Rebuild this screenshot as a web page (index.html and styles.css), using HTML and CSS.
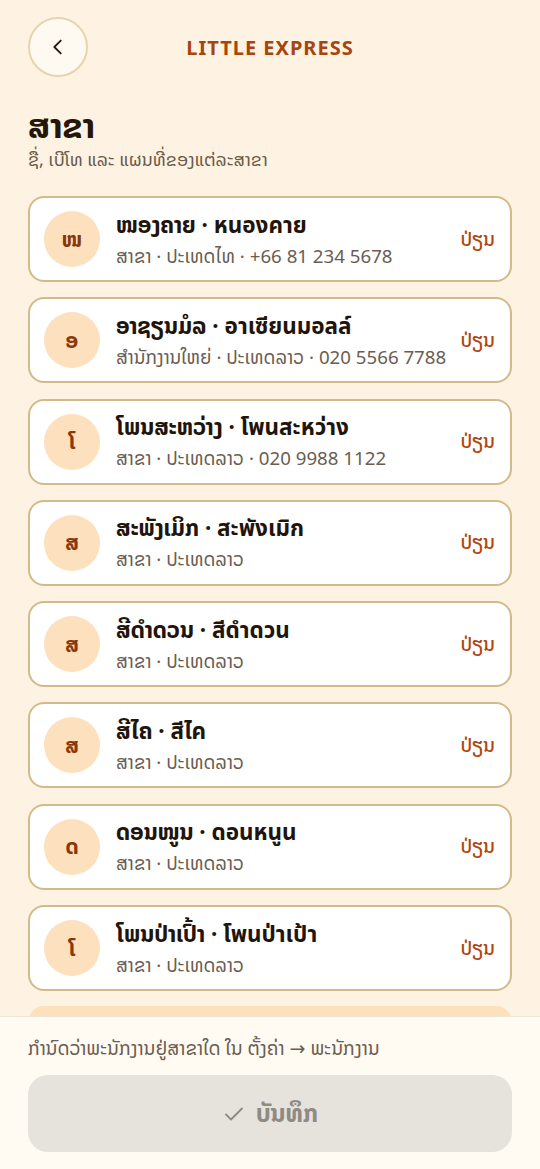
FILE: index.html
```html
<!DOCTYPE html>
<html lang="lo">
<head>
    <meta charset="UTF-8">
    <meta name="viewport" content="width=device-width, initial-scale=1.0">
    <title>ສາຂາ · Little Express</title>
    <link rel="stylesheet" href="styles.css">
</head>
<body>
    <div class="screen">
        <header class="topbar">
            <button class="back-btn" aria-label="ກັບຄືນ">
                <svg width="22" height="22" viewBox="0 0 24 24" fill="none" stroke="#2a1a0e" stroke-width="2" stroke-linecap="round" stroke-linejoin="round"><path d="M15 5l-7 7 7 7"/></svg>
            </button>
            <div class="brand">LITTLE EXPRESS</div>
            <div class="spacer"></div>
        </header>

        <main class="content">
            <h1>ສາຂາ</h1>
            <p class="subtitle">ຊື່, ເບີໂທ ແລະ ແຜນທີ່ຂອງແຕ່ລະສາຂາ</p>

            <ul class="branch-list">
                <li class="branch">
                    <div class="avatar">ໜ</div>
                    <div class="info">
                        <div class="name">ໜອງຄາຍ · หนองคาย</div>
                        <div class="meta">ສາຂາ · ປະເທດໄທ · +66 81 234 5678</div>
                    </div>
                    <a class="edit" href="#">ປ່ຽນ</a>
                </li>
                <li class="branch">
                    <div class="avatar">ອ</div>
                    <div class="info">
                        <div class="name">ອາຊຽນມໍລ · อาเซียนมอลล์</div>
                        <div class="meta">ສຳນັກງານໃຫຍ່ · ປະເທດລາວ · 020 5566 7788</div>
                    </div>
                    <a class="edit" href="#">ປ່ຽນ</a>
                </li>
                <li class="branch">
                    <div class="avatar">ໂ</div>
                    <div class="info">
                        <div class="name">ໂພນສະຫວ່າງ · โพนสะหว่าง</div>
                        <div class="meta">ສາຂາ · ປະເທດລາວ · 020 9988 1122</div>
                    </div>
                    <a class="edit" href="#">ປ່ຽນ</a>
                </li>
                <li class="branch">
                    <div class="avatar">ສ</div>
                    <div class="info">
                        <div class="name">ສະພັງເມິກ · สะพังเมิก</div>
                        <div class="meta">ສາຂາ · ປະເທດລາວ</div>
                    </div>
                    <a class="edit" href="#">ປ່ຽນ</a>
                </li>
                <li class="branch">
                    <div class="avatar">ສ</div>
                    <div class="info">
                        <div class="name">ສີດຳດວນ · สีดำดวน</div>
                        <div class="meta">ສາຂາ · ປະເທດລາວ</div>
                    </div>
                    <a class="edit" href="#">ປ່ຽນ</a>
                </li>
                <li class="branch">
                    <div class="avatar">ສ</div>
                    <div class="info">
                        <div class="name">ສີໄຄ · สีไค</div>
                        <div class="meta">ສາຂາ · ປະເທດລາວ</div>
                    </div>
                    <a class="edit" href="#">ປ່ຽນ</a>
                </li>
                <li class="branch">
                    <div class="avatar">ດ</div>
                    <div class="info">
                        <div class="name">ດອນໜູນ · ดอนหนูน</div>
                        <div class="meta">ສາຂາ · ປະເທດລາວ</div>
                    </div>
                    <a class="edit" href="#">ປ່ຽນ</a>
                </li>
                <li class="branch">
                    <div class="avatar">ໂ</div>
                    <div class="info">
                        <div class="name">ໂພນປ່າເປົ້າ · โพนป่าเป้า</div>
                        <div class="meta">ສາຂາ · ປະເທດລາວ</div>
                    </div>
                    <a class="edit" href="#">ປ່ຽນ</a>
                </li>
                <li class="add-branch" aria-label="ເພີ່ມສາຂາ"></li>
            </ul>
        </main>

        <footer class="footer">
            <p class="hint">ກຳນົດວ່າພະນັກງານຢູ່ສາຂາໃດ ໃນ ຕັ້ງຄ່າ → ພະນັກງານ</p>
            <button class="save-btn" disabled>
                <svg width="24" height="24" viewBox="0 0 24 24" fill="none" stroke="#8e8983" stroke-width="1.8" stroke-linecap="round" stroke-linejoin="round"><path d="M4 12.5l5 5L20 6.5"/></svg>
                <span>ບັນທຶກ</span>
            </button>
        </footer>
    </div>
</body>
</html>
```

FILE: styles.css
```css
/* Base */
* {
    box-sizing: border-box;
    margin: 0;
    padding: 0;
}

body {
    font-family: 'Noto Sans', 'Noto Sans Lao', 'Noto Sans Thai', 'DejaVu Sans', sans-serif;
    background: #fef3e2;
    color: #2a1a0e;
}

.screen {
    height: 100vh;
    display: flex;
    flex-direction: column;
    overflow: hidden;
}

/* Top bar */
.topbar {
    display: flex;
    align-items: center;
    padding: 17px 28px 0;
    height: 77px;
}

.back-btn {
    width: 60px;
    height: 60px;
    border-radius: 50%;
    border: 2px solid #e6d4b0;
    background: #fffaf1;
    display: flex;
    align-items: center;
    justify-content: center;
    cursor: pointer;
}

.brand {
    flex: 1;
    text-align: center;
    font-size: 20px;
    font-weight: 700;
    letter-spacing: 1px;
    color: #a8450f;
}

.spacer {
    width: 60px;
}

/* Content */
.content {
    flex: 1;
    overflow: hidden;
    padding: 28px 28px 0;
}

h1 {
    font-size: 34px;
    font-weight: 700;
    line-height: 41px;
    color: #24160b;
}

.subtitle {
    font-size: 18px;
    line-height: 24px;
    color: #6b5a4a;
    margin-top: 1px;
    margin-bottom: 25px;
}

.branch-list {
    list-style: none;
    display: flex;
    flex-direction: column;
    gap: 15.3px;
}

.branch {
    display: flex;
    align-items: center;
    gap: 16px;
    height: 86px;
    padding: 0 15px 0 14px;
    background: #fff;
    border: 2px solid #d3ba8b;
    border-radius: 16px;
}

.avatar {
    width: 56px;
    height: 56px;
    flex-shrink: 0;
    border-radius: 50%;
    background: #fde0bd;
    color: #8a380b;
    font-size: 21px;
    font-weight: 700;
    display: flex;
    align-items: center;
    justify-content: center;
}

.info {
    flex: 1;
    min-width: 0;
}

.name {
    font-size: 22.5px;
    line-height: 28px;
    font-weight: 700;
    color: #1f150c;
    white-space: nowrap;
}

.meta {
    font-size: 18.7px;
    line-height: 24px;
    color: #6b5d50;
    margin-top: 5px;
    white-space: nowrap;
}

.edit {
    font-size: 19px;
    font-weight: 500;
    color: #b0470e;
    text-decoration: none;
}

.add-branch {
    height: 86px;
    flex-shrink: 0;
    border-radius: 16px;
    background: #fde0bc;
}

/* Footer */
.footer {
    background: #fffaf2;
    border-top: 1px solid #efe5d5;
    padding: 19px 28px 17px;
}

.hint {
    font-size: 19px;
    line-height: 24px;
    color: #6b5d50;
    margin-bottom: 15px;
}

.save-btn {
    width: 100%;
    height: 77px;
    border: none;
    border-radius: 20px;
    background: #e6e2dc;
    color: #8f8a84;
    font-family: inherit;
    font-size: 24px;
    font-weight: 700;
    display: flex;
    align-items: center;
    justify-content: center;
    gap: 10px;
}
```
